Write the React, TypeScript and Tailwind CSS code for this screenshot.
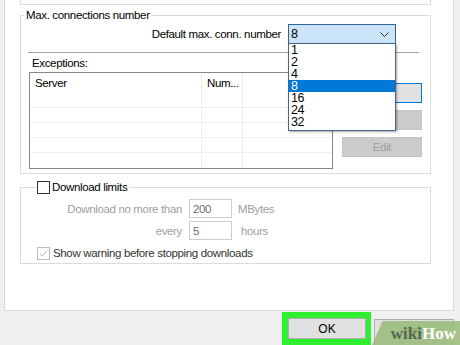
import React from "react";

const rows = [0, 1, 2];

function Column({ w, title, last }: { w: string; title: string; last?: boolean }) {
  return (
    <div className={`flex flex-col ${w} ${last ? "" : "border-r border-[#ececec]"}`}>
      <div className="h-[35px] border-b border-[#f0f0f0] pl-[5px] pt-[3px] text-black leading-[14px] whitespace-nowrap overflow-hidden">
        {title}
      </div>
      {rows.map((r) => (
        <div key={r} className="h-[15px] border-b border-[#f0f0f0]" />
      ))}
    </div>
  );
}

export default function App() {
  const items = ["1", "2", "4", "8", "16", "24", "32"];
  return (
    <div className="relative w-[460px] h-[345px] overflow-hidden bg-[#f0f0f0] font-['Liberation_Sans',Arial,sans-serif] text-[11.5px] tracking-[-0.35px] leading-[14px] text-black">
      {/* tab panel */}
      <div className="ml-[4px] w-[450px] h-[311px] bg-white border-x border-b border-[#dadada]">
        {/* previous group stub */}
        <div className="ml-[15px] w-[411px] h-[5px] border-x border-b border-[#dcdcdc]" />

        {/* Max connections number */}
        <fieldset className="mt-[3px] ml-[15px] w-[411px] h-[166px] border border-[#dcdcdc]">
          <legend className="ml-[3px] px-[2px] leading-[14px]">Max. connections number</legend>
          <div className="mt-[2px] flex items-center justify-end pr-[34px]">
            <span className="mr-[7px]">Default max. conn. number</span>
            <div className="relative w-[108px] h-[20px] bg-[#cce4f7] border border-[#2f6496] flex items-center pl-[2px] text-[12.5px]">
              <span>8</span>
              <svg className="absolute right-[6px] top-[7px]" width="9" height="6" viewBox="0 0 9 6">
                <polyline points="0.5,0.5 4.5,4.5 8.5,0.5" fill="none" stroke="#333" strokeWidth="1" />
              </svg>
              {/* dropdown list */}
              <div className="absolute left-[-1px] top-[18px] z-10 w-[108px] bg-white border border-[#47688a] shadow-[1px_1px_2px_rgba(0,0,0,0.35)] pb-[2px]">
                {items.map((it) => (
                  <div
                    key={it}
                    className={`h-[12px] leading-[12px] pl-[2px] text-[12.5px] ${it === "8" ? "bg-[#0078d7] text-white" : "text-black"}`}
                  >
                    {it}
                  </div>
                ))}
              </div>
            </div>
          </div>
          <div className="mt-[8px] ml-[7px] w-[391px] h-px bg-[#a0a0a0]" />
          <div className="mt-[3px] ml-[11px]">Exceptions:</div>
          <div className="mt-[2px] flex items-start">
            <div className="ml-[8px] w-[304px] h-[97px] border border-[#828790] flex">
              <Column w="w-[172px]" title="Server" />
              <Column w="w-[41px]" title="Num..." />
              <Column w="flex-1" title="" last />
            </div>
            <div className="ml-[9px] mt-[11px] flex flex-col">
              <div className="w-[80px] h-[20px] bg-[#e1e1e1] border border-[#0078d7]" />
              <div className="mt-[7px] w-[80px] h-[20px] bg-[#cccccc] border border-[#c4c4c4]" />
              <div className="mt-[7px] w-[80px] h-[20px] bg-[#cccccc] border border-[#c4c4c4] flex items-center justify-center text-[#a0a0a0]">
                Edit
              </div>
            </div>
          </div>
        </fieldset>

        {/* Download limits */}
        <fieldset className="mt-[6px] ml-[15px] w-[411px] h-[84px] border border-[#dcdcdc]">
          <legend className="ml-[14px] px-[2px] h-[14px] flex items-center">
            <span className="w-[13px] h-[13px] border border-[#333333] bg-white inline-block" />
            <span className="ml-[2px]">Download limits</span>
          </legend>
          <div className="mt-[5px] flex flex-col gap-[3px]">
            <div className="flex items-center h-[19px]">
              <span className="w-[161px] text-right text-[#a0a0a0]">Download no more than</span>
              <div className="ml-[7px] w-[43px] h-[19px] border border-[#cccccc] bg-white pl-[3px] flex items-center text-[#6d6d6d]">
                200
              </div>
              <span className="ml-[6px] text-[#a0a0a0]">MBytes</span>
            </div>
            <div className="flex items-center h-[19px]">
              <span className="w-[161px] text-right text-[#a0a0a0]">every</span>
              <div className="ml-[7px] w-[43px] h-[19px] border border-[#cccccc] bg-white pl-[3px] flex items-center text-[#6d6d6d]">
                5
              </div>
              <span className="ml-[9px] text-[#a0a0a0]">hours</span>
            </div>
          </div>
          <div className="mt-[6px] ml-[16px] flex items-center">
            <span className="relative w-[13px] h-[13px] border border-[#bcbcbc] bg-white inline-block">
              <svg className="absolute left-[1px] top-[1px]" width="9" height="9" viewBox="0 0 9 9">
                <polyline points="1,4.5 3.5,7 8,1.5" fill="none" stroke="#b5b5b5" strokeWidth="1" />
              </svg>
            </span>
            <span className="ml-[3px] text-[#333333]">Show warning before stopping downloads</span>
          </div>
        </fieldset>
      </div>

      {/* bottom buttons */}
      <div className="mt-[1px] flex items-start">
        <div className="ml-[282px] w-[89px] h-[40px] bg-[#2ef02e] pt-[6px] pl-[6px]">
          <div className="w-[78px] h-[21px] bg-[#e1e1e1] border border-[#adadad] flex items-center justify-center text-[12px] tracking-normal">
            OK
          </div>
        </div>
        <div className="ml-[3px] mt-[7px] w-[80px] h-[30px] bg-[#e1e1e1] border border-[#adadad] flex justify-center pt-[3px]">
          Help
        </div>
      </div>

      {/* watermark */}
      <div className="absolute left-[372px] top-[321px] w-[88px] h-[24px] bg-[#9cbd80]/90 [clip-path:polygon(12%_0,100%_0,100%_100%,0_100%)] flex items-end justify-end pr-[4px] pb-[1px] font-['Liberation_Serif',serif] font-bold text-[17px] leading-[20px] tracking-normal">
        <span className="text-[#56684a]">wiki</span>
        <span className="text-white">How</span>
      </div>
    </div>
  );
}
